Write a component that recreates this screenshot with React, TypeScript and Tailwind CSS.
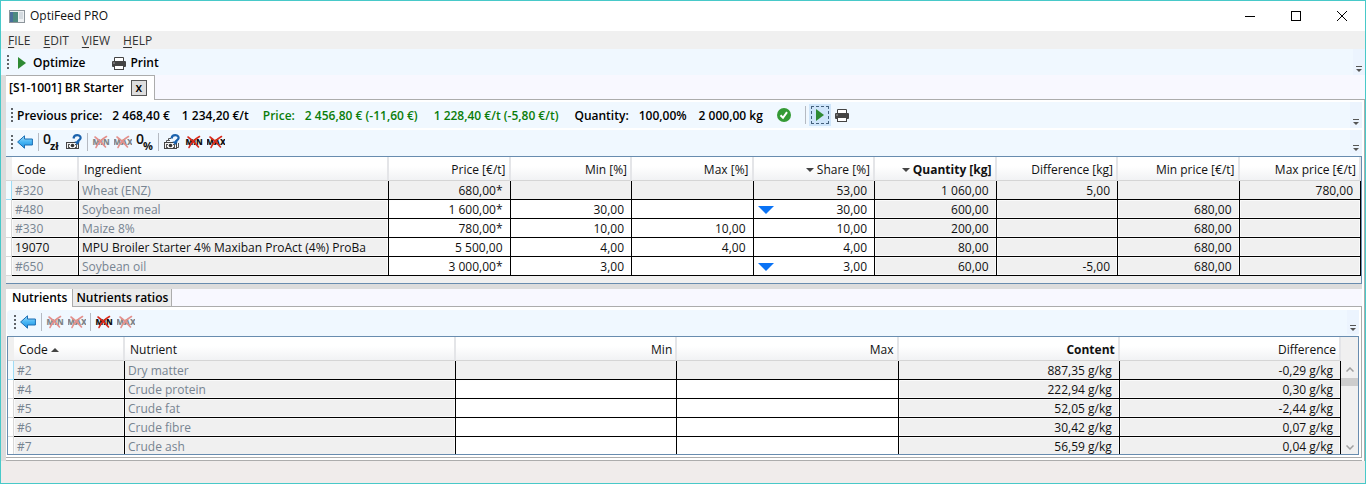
import type { ReactNode } from "react";

function Grip() {
  return (
    <svg width="3" height="14" viewBox="0 0 3 14" className="shrink-0" aria-hidden="true">
      {[0, 4, 8, 12].map((y) => (
        <rect key={y} x="0" y={y} width="2" height="2" fill="#5f6469" />
      ))}
    </svg>
  );
}

function Overflow() {
  return (
    <button type="button" aria-label="More commands" className="ml-auto flex h-full w-3 shrink-0 items-end justify-center bg-[#ecf4fe] pb-[3px]">
      <svg width="6" height="6" viewBox="0 0 6 6" aria-hidden="true">
        <rect width="6" height="1" fill="#555" />
        <path d="M0 3h6L3 6z" fill="#555" />
      </svg>
    </button>
  );
}

function Separator() {
  return <span className="mx-0.5 h-[18px] w-px shrink-0 bg-[#b5bac2]" />;
}

function PlayIcon() {
  return (
    <svg width="8" height="12" viewBox="0 0 8 12" aria-hidden="true">
      <path d="M0 0L8 6L0 12z" fill="#2f8a33" />
    </svg>
  );
}

function PrinterIcon() {
  return (
    <svg width="14" height="13" viewBox="0 0 14 13" aria-hidden="true">
      <path d="M2.5 4V0.5H11.5V4" fill="#fff" stroke="#444" />
      <rect x="0" y="4" width="14" height="6" rx="1" fill="#444" />
      <rect x="1.5" y="5.5" width="1" height="1" fill="#fff" />
      <rect x="2.5" y="8.5" width="9" height="4" fill="#fff" stroke="#444" />
    </svg>
  );
}

function BackIcon() {
  return (
    <svg width="16" height="14" viewBox="0 0 16 14" aria-hidden="true">
      <defs>
        <linearGradient id="back" x1="0" y1="0" x2="0" y2="1">
          <stop offset="0" stopColor="#a3defc" />
          <stop offset="0.5" stopColor="#48b6f4" />
          <stop offset="1" stopColor="#1d8fe0" />
        </linearGradient>
      </defs>
      <path d="M0.6 7L7.5 0.8V4H15.4V10H7.5V13.2z" fill="url(#back)" stroke="#1d6fb4" strokeLinejoin="round" />
    </svg>
  );
}

function ZeroIcon({ unit }: { unit: string }) {
  return (
    <svg width="18" height="18" viewBox="0 0 18 18" aria-hidden="true" className="overflow-visible font-['Open_Sans',sans-serif]">
      <text x="0" y="11" fontSize="14" fontWeight="600" fill="#111">0</text>
      <text x="7" y="17" fontSize="11" fontWeight="700" fill="#111">{unit}</text>
    </svg>
  );
}

function MoneyIcon({ stacked = false }: { stacked?: boolean }) {
  return (
    <svg width="16" height="16" viewBox="0 0 16 16" aria-hidden="true">
      {stacked && (
        <path d="M2.5 8V6.5H6M4.5 6V4.5H7M14.5 9V13.5H13" fill="none" stroke="#555" />
      )}
      <rect x="0.5" y="8.5" width="12" height="6" fill="#f4f4f4" stroke="#444" />
      <path d="M2 10h2v1H3v1H2zM9 10h2v2h-1v-1H9zM2 12h1v1h1v1H2zM10 12h1v2H9v-1h1z" fill="#555" />
      <circle cx="6.5" cy="11.5" r="1.8" fill="#333" />
      <path d="M7.5 4.500C7.800 2 9.500 1.200 11.300 1.200C14 1.200 15.200 3.200 14.200 5C13.500 6.200 11.600 6.400 11.300 8.500" fill="none" stroke="#1a62ad" strokeWidth="2.200" />
      <path d="M8.500 7.500H14L11.200 11z" fill="#1a62ad" />
    </svg>
  );
}

function LimitIcon({ label, faded = false }: { label: string; faded?: boolean }) {
  return (
    <svg
      width="18"
      height="14"
      viewBox="0 0 18 14"
      aria-hidden="true"
      className={`font-['Open_Sans',sans-serif] ${faded ? "opacity-50" : ""}`}
    >
      <text x="9" y="10" fontSize="8" fontWeight="800" textAnchor="middle" fill="#111">{label}</text>
      <path d="M3 2C6.500 4.500 10.500 8 13.500 12M14.500 1.500C10 4 6 8 4 12.500" fill="none" stroke="#d92a1c" strokeWidth="1.600" strokeLinecap="round" />
    </svg>
  );
}

function IconButton({ label, children }: { label: string; children: ReactNode }) {
  return (
    <button type="button" aria-label={label} className="flex h-[22px] w-[22px] shrink-0 items-center justify-center">
      {children}
    </button>
  );
}

function SortArrow({ up = false }: { up?: boolean }) {
  return (
    <svg width="8" height="4" viewBox="0 0 8 4" aria-hidden="true" className="inline-block align-middle">
      <path d={up ? "M0 4L4 0L8 4z" : "M0 0H8L4 4z"} fill="#444" />
    </svg>
  );
}

const ingredientRows = [
  ["#320", "Wheat (ENZ)", "680,00*", "", "", "53,00", "1 060,00", "5,00", "", "780,00"],
  ["#480", "Soybean meal", "1 600,00*", "30,00", "", "30,00", "600,00", "", "680,00", ""],
  ["#330", "Maize 8%", "780,00*", "10,00", "10,00", "10,00", "200,00", "", "680,00", ""],
  ["19070", "MPU Broiler Starter 4% Maxiban ProAct (4%) ProBa", "5 500,00", "4,00", "4,00", "4,00", "80,00", "", "680,00", ""],
  ["#650", "Soybean oil", "3 000,00*", "3,00", "", "3,00", "60,00", "-5,00", "680,00", ""],
];

const nutrientRows = [
  ["#2", "Dry matter", "", "", "887,35 g/kg", "-0,29 g/kg"],
  ["#4", "Crude protein", "", "", "222,94 g/kg", "0,30 g/kg"],
  ["#5", "Crude fat", "", "", "52,05 g/kg", "-2,44 g/kg"],
  ["#6", "Crude fibre", "", "", "30,42 g/kg", "0,07 g/kg"],
  ["#7", "Crude ash", "", "", "56,59 g/kg", "0,04 g/kg"],
];

interface GridProps {
  columns: { title: string; width?: string; sort?: "up" | "down"; bold?: boolean }[];
  rows: string[][];
  // columns the user may type into, white except in the current row
  editable: number[];
  markColumn?: number;
}

function Grid({ columns, rows, editable, markColumn }: GridProps) {
  return (
    <table className="w-full table-fixed border-separate border-spacing-0">
      <colgroup>
        <col className="w-[6px]" />
        {columns.map((c) => (
          <col key={c.title} className={c.width} />
        ))}
      </colgroup>
      <thead>
        <tr className="h-6">
          <th className="border-b border-[#d5d5d5] bg-[#f0f0f0] p-0" aria-label="Row" />
          {columns.map((c, i) => (
            <th
              key={c.title}
              className={`overflow-hidden border-r-2 border-b border-r-[#e4e5e8] border-b-[#d5d5d5] bg-linear-to-b from-white from-40% to-[#f1f2f4] p-0 pt-0.5 whitespace-nowrap ${
                i < 2 ? "pl-[5px] text-left" : "pr-[3px] text-right"
              } ${c.bold ? "font-bold" : "font-normal"}`}
            >
              {c.sort === "down" && <SortArrow />} {c.title} {c.sort === "up" && <SortArrow up />}
            </th>
          ))}
        </tr>
      </thead>
      <tbody>
        {rows.map((row, r) => (
          <tr key={row[0]} className="h-[19px]">
            <td className={`border-r border-b p-0 ${r === 0 ? "border-[#9fdcf5] bg-[#f3fbff]" : "border-[#d8d8d8] bg-white"}`} />
            {row.map((cell, i) => {
              const white = r > 0 && editable.includes(i);
              const muted = i < 2 && row[0].startsWith("#");
              return (
                <td
                  key={i}
                  className={`overflow-hidden border-r border-b border-black p-0 pt-px leading-[17px] whitespace-nowrap ${
                    white ? "bg-white" : r === 0 ? "bg-[#f0f0f0]" : "bg-[#f0f0f0] inset-shadow-[0_0_0_1px_#fafafa]"
                  } ${muted ? "text-[#778491]" : ""} ${i < 2 ? "pl-[3px] text-left" : "pr-[7px] text-right"}`}
                >
                  {i === markColumn && (r === 1 || r === 4) ? (
                    <span className="flex items-center justify-between pl-1">
                      <svg width="16" height="8" viewBox="0 0 16 8" aria-label="Lower limit reached">
                        <path d="M0 0H16L8 8z" fill="#0a73f5" />
                      </svg>
                      {cell}
                    </span>
                  ) : (
                    cell
                  )}
                </td>
              );
            })}
          </tr>
        ))}
      </tbody>
    </table>
  );
}

export default function App() {
  return (
    <div className="flex min-h-screen flex-col border border-[#48c9c9] bg-[#f0eceb] font-['Open_Sans',sans-serif] text-[12px] leading-4 text-[#111]">
      <header className="flex h-[30px] items-center bg-white pl-2">
        <svg width="16" height="13" viewBox="0 0 16 13" aria-hidden="true">
          <rect x="0.5" y="0.5" width="15" height="12" fill="#eef1f3" stroke="#8d959b" />
          <rect x="1" y="2" width="8" height="10" fill="#4d8a80" />
          <rect x="1" y="2" width="3" height="10" fill="#4a6f9c" />
          <rect x="10" y="2" width="4" height="7" fill="#d5dbe0" />
        </svg>
        <h1 className="ml-[5px]">OptiFeed PRO</h1>
        <div className="ml-auto flex">
          <button type="button" aria-label="Minimize" className="flex w-[46px] justify-center">
            <svg width="10" height="10" viewBox="0 0 10 10"><rect y="5" width="10" height="1" /></svg>
          </button>
          <button type="button" aria-label="Maximize" className="flex w-[46px] justify-center">
            <svg width="10" height="10" viewBox="0 0 10 10"><rect x="0.5" y="0.5" width="9" height="9" fill="none" stroke="#000" /></svg>
          </button>
          <button type="button" aria-label="Close" className="flex w-[46px] justify-center">
            <svg width="10" height="10" viewBox="0 0 10 10"><path d="M0 0L10 10M10 0L0 10" stroke="#000" /></svg>
          </button>
        </div>
      </header>

      <nav className="flex h-[18px] items-center gap-[13px] bg-[#f0f0f0] pt-0.5 pl-[7px] text-[#333]">
        {["FILE", "EDIT", "VIEW", "HELP"].map((item) => (
          <button key={item} type="button">
            <span className="underline underline-offset-2">{item[0]}</span>
            {item.slice(1)}
          </button>
        ))}
      </nav>

      <div className="flex h-[26px] items-center bg-[#f0f8ff] pl-1.5 font-semibold text-black">
        <Grip />
        <button type="button" className="ml-2 flex items-center gap-[7px] pt-0.5">
          <PlayIcon />
          Optimize
        </button>
        <button type="button" className="ml-[27px] flex items-center gap-1 pt-0.5">
          <PrinterIcon />
          Print
        </button>
        <Overflow />
      </div>

      <main className="border-l-[5px] border-[#dcdcdc] bg-white">
        <div className="flex h-[25px] bg-[#f8f8ff]">
          <div className="flex items-center gap-[7px] border-t border-r border-[#acacac] bg-white pr-[7px] pl-[3px] font-semibold text-black">
            [S1-1001] BR Starter
            <button type="button" aria-label="Close tab" className="flex h-4 w-4 items-center justify-center border border-[#555] bg-[#dedede] leading-3">
              x
            </button>
          </div>
          <div className="flex-1 border-b border-[#acacac]" />
        </div>

        <div className="border-r border-[#acacac] pt-0.5 pr-0.5">
          <div className="flex h-[26px] items-center bg-[#f0f8ff] pl-[5px] font-semibold text-black">
            <Grip />
            <div className="ml-[3px] flex items-center pt-0.5 whitespace-nowrap">
              <span>Previous price:</span>
              <span className="ml-2.5">2 468,40 €</span>
              <span className="ml-3">1 234,20 €/t</span>
              <span className="ml-3.5 text-[#0a7d0a]">Price:</span>
              <span className="ml-2.5 text-[#0a7d0a]">2 456,80 € (-11,60 €)</span>
              <span className="ml-4 text-[#0a7d0a]">1 228,40 €/t (-5,80 €/t)</span>
              <span className="ml-4">Quantity:</span>
              <span className="ml-2.5">100,00%</span>
              <span className="ml-3">2 000,00 kg</span>
            </div>
            <svg width="14" height="14" viewBox="0 0 14 14" className="ml-3.5" aria-label="Optimal">
              <circle cx="7" cy="7" r="7" fill="#349a35" />
              <path d="M3.500 7.200L6 9.800L10 4.200" fill="none" stroke="#fff" strokeWidth="2" />
            </svg>
            <span className="ml-3" />
            <Separator />
            <button type="button" aria-label="Run" className="ml-px flex h-[22px] w-[22px] items-center justify-center bg-[#cfe5fa] p-0.5">
              <span className="flex h-full w-full items-center justify-center border border-dashed border-[#44607c]">
                <PlayIcon />
              </span>
            </button>
            <IconButton label="Print recipe"><PrinterIcon /></IconButton>
            <Overflow />
          </div>

          <div className="mt-0.5 flex h-[26px] items-center bg-[#f0f8ff] pb-0.5 pl-[5px]">
            <Grip />
            <IconButton label="Back"><BackIcon /></IconButton>
            <Separator />
            <IconButton label="Reset price"><ZeroIcon unit="zł" /></IconButton>
            <IconButton label="Query price"><MoneyIcon /></IconButton>
            <Separator />
            <IconButton label="Clear min"><LimitIcon label="MIN" faded /></IconButton>
            <IconButton label="Clear max"><LimitIcon label="MAX" faded /></IconButton>
            <IconButton label="Reset share"><ZeroIcon unit="%" /></IconButton>
            <Separator />
            <IconButton label="Query all prices"><MoneyIcon stacked /></IconButton>
            <IconButton label="Clear all min"><LimitIcon label="MIN" /></IconButton>
            <IconButton label="Clear all max"><LimitIcon label="MAX" /></IconButton>
            <Overflow />
          </div>

          <section className="border-y border-r border-[#688caf] bg-[#f0f0f0] pb-[7px]">
            <Grid
              columns={[
                { title: "Code", width: "w-[67px]" },
                { title: "Ingredient", width: "w-[310px]" },
                { title: "Price [€/t]" },
                { title: "Min [%]" },
                { title: "Max [%]" },
                { title: "Share [%]", sort: "down" },
                { title: "Quantity [kg]", sort: "down", bold: true },
                { title: "Difference [kg]" },
                { title: "Min price [€/t]" },
                { title: "Max price [€/t]" },
              ]}
              rows={ingredientRows}
              editable={[2, 3, 4, 5]}
              markColumn={5}
            />
          </section>

          <div className="h-[5px] bg-[#dcdcdc]" />

          <div className="flex h-[18px] bg-[#f8f8ff] font-semibold text-black">
            <button type="button" className="bg-white pr-[5px] pl-1.5">Nutrients</button>
            <button type="button" className="border-x border-b border-[#acacac] bg-[#ececec] px-[3px]">Nutrients ratios</button>
            <div className="flex-1 border-b border-[#acacac]" />
          </div>

          <div className="border-r border-b border-[#acacac] pt-[3px] pr-0.5 pb-0.5 pl-px">
            <div className="flex h-[26px] items-center rounded bg-[#f0f8ff] pb-0.5 pl-[7px]">
              <Grip />
              <IconButton label="Back"><BackIcon /></IconButton>
              <Separator />
              <IconButton label="Clear min"><LimitIcon label="MIN" faded /></IconButton>
              <IconButton label="Clear max"><LimitIcon label="MAX" faded /></IconButton>
              <Separator />
              <IconButton label="Clear all min"><LimitIcon label="MIN" /></IconButton>
              <IconButton label="Clear all max"><LimitIcon label="MAX" faded /></IconButton>
              <Overflow />
            </div>
            <section className="flex h-[119px] overflow-hidden border border-[#688caf] bg-[#f0f0f0]">
              <div className="flex-1">
                <Grid
                  columns={[
                    { title: "Code", width: "w-[111px]", sort: "up" },
                    { title: "Nutrient", width: "w-[331px]" },
                    { title: "Min" },
                    { title: "Max" },
                    { title: "Content", bold: true },
                    { title: "Difference" },
                  ]}
                  rows={nutrientRows}
                  editable={[2, 3]}
                />
              </div>
              <div className="flex w-[17px] flex-col items-center pt-[30px] pb-1">
                <svg width="8" height="5" viewBox="0 0 8 5" aria-hidden="true">
                  <path d="M0.500 4.500L4 1L7.500 4.500" fill="none" stroke="#a0a0a0" strokeWidth="1.500" />
                </svg>
                <div className="mt-1.5 h-2 w-full bg-[#cdcdcd]" />
                <svg width="8" height="5" viewBox="0 0 8 5" aria-hidden="true" className="mt-auto">
                  <path d="M0.500 0.500L4 4L7.500 0.500" fill="none" stroke="#a0a0a0" strokeWidth="1.500" />
                </svg>
              </div>
            </section>
          </div>
          <div className="h-[3px] border-b border-[#acacac]" />
        </div>
      </main>
    </div>
  );
}
